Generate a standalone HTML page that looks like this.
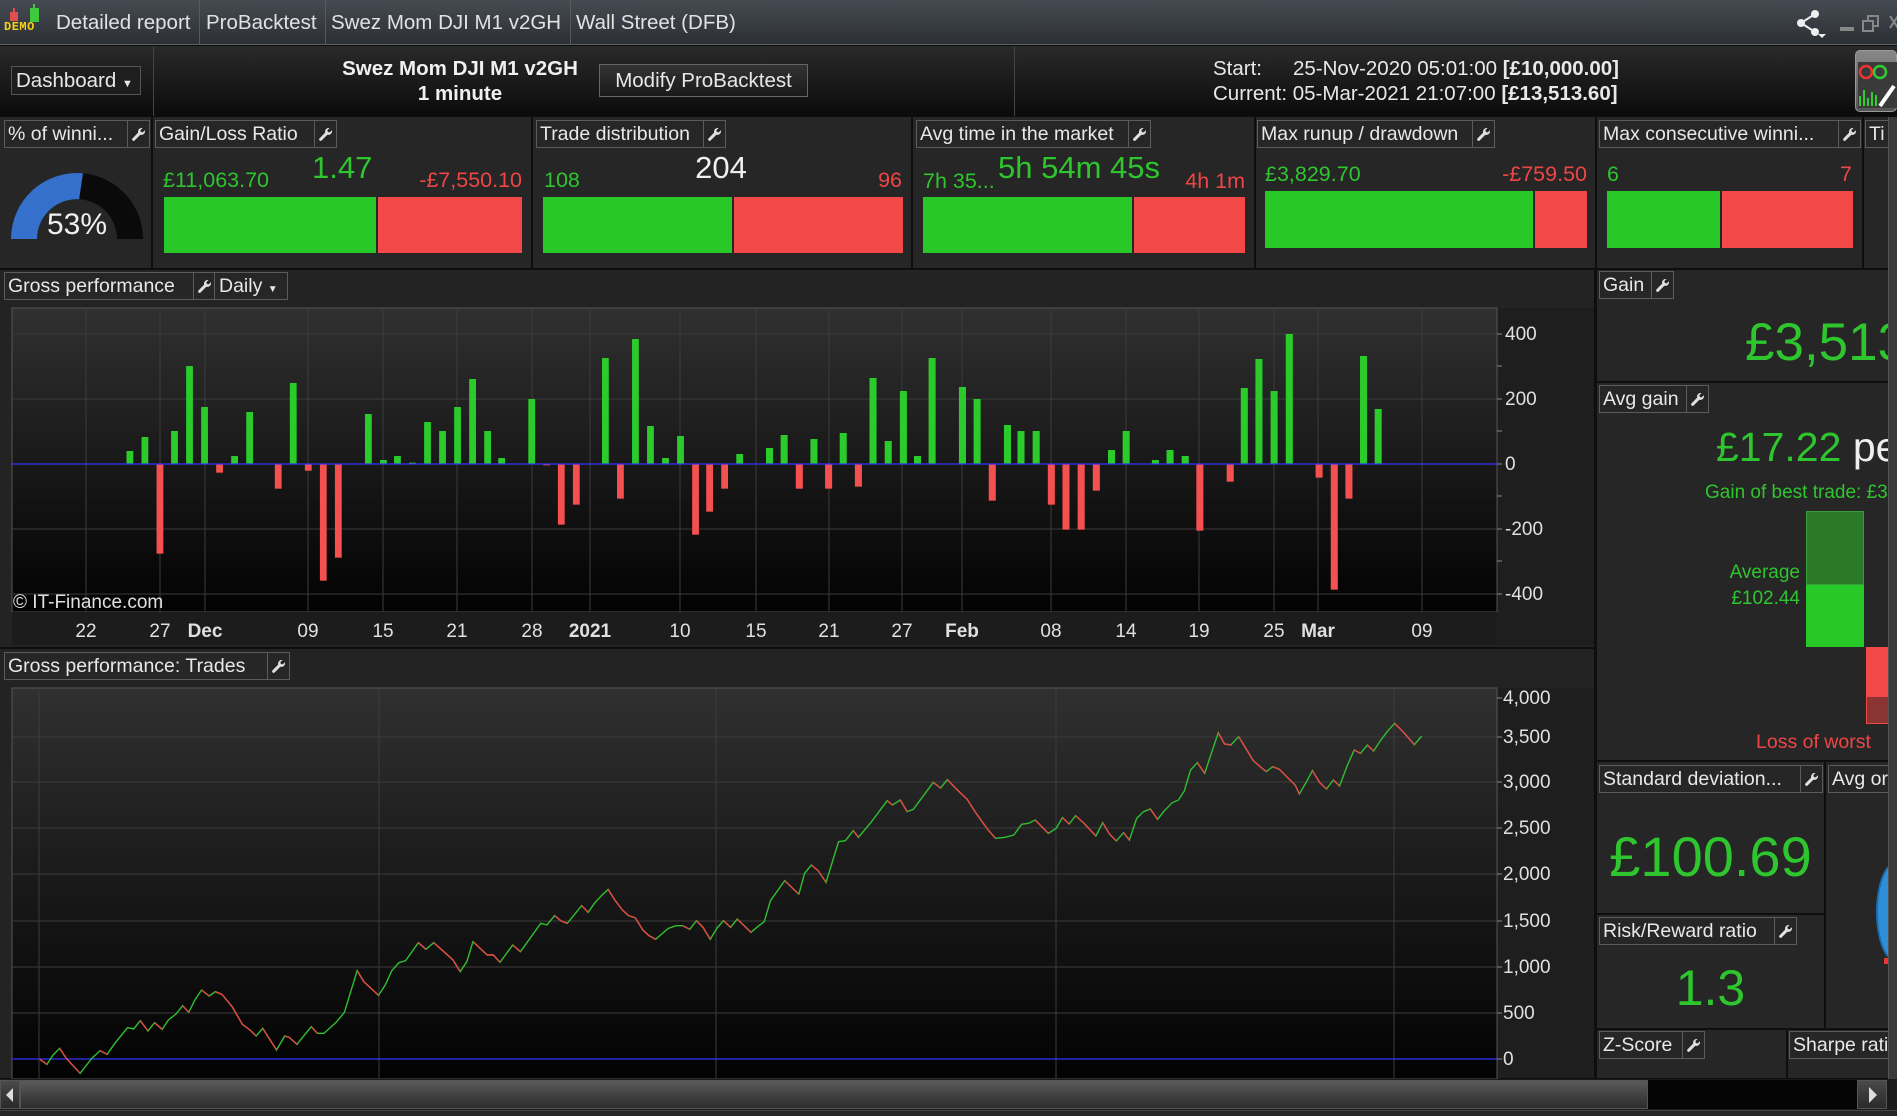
<!DOCTYPE html>
<html><head><meta charset="utf-8">
<style>
*{margin:0;padding:0;box-sizing:border-box}
body{width:1897px;height:1116px;background:#0e0e0e;font-family:"Liberation Sans",Arial,sans-serif;color:#e6e6e6;position:relative;overflow:hidden}
.a{position:absolute}
.p{position:absolute;background:#262626}
.hb{position:absolute;height:28px;display:flex;border:1px solid #5c5c5c;background:#262626;font-size:19.5px;line-height:26px;color:#e8e8e8;white-space:nowrap;overflow:hidden}
.hb .t{flex:1;padding-left:3px;overflow:hidden}
.hb .k{width:22px;flex:none;border-left:1px solid #5c5c5c;display:flex;align-items:center;justify-content:center}
.g{color:#2ec52e}.r{color:#f04545}
.bar{position:absolute}
.gb{background:#29c829}.rb{background:#f24848}
.tl{position:absolute;font-size:20.5px;color:#e2e2e2;top:11px;white-space:nowrap}
.sep{position:absolute;width:1px;background:#5a5a5a}
.sv{font-size:21.5px}
</style></head><body>
<svg width="0" height="0" style="position:absolute"><defs>
<symbol id="wr" viewBox="0 0 16 16"><path d="M11.5 1a4 4 0 0 0-3.9 5L1.5 12.3a1.3 1.3 0 0 0 0 1.8l.4.4a1.3 1.3 0 0 0 1.8 0L10 8.3a4 4 0 0 0 5-3.9l-.2-1-2.3 2.3-2-.4-.5-2L12.3 1z" fill="#e0e0e0"/></symbol>
</defs></svg>

<!-- Title bar -->
<div class="a" style="left:0;top:0;width:1897px;height:45px;background:linear-gradient(#464b52,#2c3035);border-bottom:1px solid #5c6066"></div>
<div class="a" style="left:10px;top:12px;width:8px;height:9px;background:#e05050"></div>
<div class="a" style="left:13px;top:8px;width:2px;height:4px;background:#e05050"></div>
<div class="a" style="left:30px;top:8px;width:9px;height:14px;background:#3ec93e"></div>
<div class="a" style="left:33px;top:4px;width:2px;height:4px;background:#3ec93e"></div>
<div class="a" style="left:4px;top:20px;font-size:12px;font-weight:bold;color:#f2d21a;letter-spacing:0.5px;font-family:'Liberation Mono',monospace">DEMO</div>
<div class="tl" style="left:56px">Detailed report</div>
<div class="sep" style="left:199px;top:0;height:45px"></div>
<div class="tl" style="left:206px">ProBacktest</div>
<div class="sep" style="left:325px;top:0;height:45px"></div>
<div class="tl" style="left:331px">Swez Mom DJI M1 v2GH</div>
<div class="sep" style="left:570px;top:0;height:45px"></div>
<div class="tl" style="left:576px">Wall Street (DFB)</div>
<svg class="a" style="left:1790px;top:8px" width="107" height="30">
<circle cx="25" cy="6" r="4" fill="#eee"/><circle cx="11" cy="15" r="4" fill="#eee"/><circle cx="25" cy="24" r="4" fill="#eee"/>
<path d="M25 6L11 15L25 24" stroke="#eee" stroke-width="2" fill="none"/><path d="M28 26h8l-4 4z" fill="#eee"/>
<rect x="50" y="19" width="14" height="4" fill="#888"/>
<rect x="78" y="8" width="10" height="10" fill="none" stroke="#888" stroke-width="2"/><rect x="73" y="13" width="10" height="10" fill="#3a3e44" stroke="#888" stroke-width="2"/>
<path d="M100 8l8 12M108 8l-8 12" stroke="#888" stroke-width="2"/>
</svg>

<!-- Header row -->
<div class="a" style="left:0;top:46px;width:1897px;height:70px;background:linear-gradient(#2a2a2a,#0b0b0b)"></div>
<div class="sep" style="left:153px;top:46px;height:70px;background:#444"></div>
<div class="sep" style="left:1014px;top:46px;height:70px;background:#444"></div>
<div class="a" style="left:11px;top:66px;width:130px;height:29px;border:1px solid #555;background:#1e1e1e;font-size:20.5px;line-height:27px;padding-left:4px;color:#e8e8e8;white-space:nowrap">Dashboard <span style="font-size:11px">▼</span></div>
<div class="a" style="left:320px;top:56px;width:280px;text-align:center;font-size:20.5px;font-weight:bold;color:#f0f0f0;line-height:25px;white-space:nowrap">Swez Mom DJI M1 v2GH<br>1 minute</div>
<div class="a" style="left:599px;top:64px;width:209px;height:33px;border:1px solid #666;background:linear-gradient(#333,#1a1a1a);font-size:20.5px;line-height:31px;text-align:center;color:#e8e8e8;white-space:nowrap">Modify ProBacktest</div>
<div class="a" style="left:1213px;top:56px;font-size:20.5px;line-height:25px;color:#e8e8e8;white-space:nowrap">Start:<span style="display:inline-block;width:31px"></span>25-Nov-2020 05:01:00 <b>[£10,000.00]</b><br>Current: 05-Mar-2021 21:07:00 <b>[£13,513.60]</b></div>
<div class="a" style="left:1855px;top:50px;width:42px;height:62px;border-radius:5px;background:linear-gradient(#888,#555);border:1px solid #999"></div>
<div class="a" style="left:1858px;top:62px;width:39px;height:46px;background:#3a3a3a"></div>
<svg class="a" style="left:1858px;top:62px" width="39" height="46"><circle cx="8" cy="10" r="6" fill="none" stroke="#e33" stroke-width="2.5"/><circle cx="22" cy="10" r="6" fill="none" stroke="#3c3" stroke-width="2.5"/><path d="M2 44V34M6 44V28M10 44V36M14 44V30M18 44V33" stroke="#3c3" stroke-width="2"/><path d="M36 24L22 44" stroke="#fff" stroke-width="4"/></svg>

<!-- Stats row panels -->
<div class="p" style="left:0;top:117px;width:151px;height:151px"></div>
<div class="p" style="left:153px;top:117px;width:378px;height:151px"></div>
<div class="p" style="left:533px;top:117px;width:378px;height:151px"></div>
<div class="p" style="left:913px;top:117px;width:341px;height:151px"></div>
<div class="p" style="left:1256px;top:117px;width:339px;height:151px"></div>
<div class="p" style="left:1597px;top:117px;width:265px;height:151px"></div>
<div class="p" style="left:1864px;top:117px;width:24px;height:151px"></div>

<div class="hb" style="left:4px;top:120px;width:146px"><span class="t">% of winni...</span><span class="k"><svg width="15" height="15"><use href="#wr"/></svg></span></div>
<div class="hb" style="left:155px;top:120px;width:182px"><span class="t">Gain/Loss Ratio</span><span class="k"><svg width="15" height="15"><use href="#wr"/></svg></span></div>
<div class="hb" style="left:536px;top:120px;width:190px"><span class="t">Trade distribution</span><span class="k"><svg width="15" height="15"><use href="#wr"/></svg></span></div>
<div class="hb" style="left:916px;top:120px;width:235px"><span class="t">Avg time in the market</span><span class="k"><svg width="15" height="15"><use href="#wr"/></svg></span></div>
<div class="hb" style="left:1257px;top:120px;width:238px"><span class="t">Max runup / drawdown</span><span class="k"><svg width="15" height="15"><use href="#wr"/></svg></span></div>
<div class="hb" style="left:1599px;top:120px;width:262px"><span class="t">Max consecutive winni...</span><span class="k"><svg width="15" height="15"><use href="#wr"/></svg></span></div>
<div class="hb" style="left:1865px;top:120px;width:30px"><span class="t">Ti</span></div>

<!-- gauge -->
<svg class="a" style="left:0;top:165px" width="151" height="80">
<path d="M11 74A66 66 0 0 1 83 8.3L79.2 34.2A40 40 0 0 0 37 74Z" fill="#3570cc"/>
<path d="M83 8.3A66 66 0 0 1 143 74H117A40 40 0 0 0 79.2 34.2Z" fill="#0a0a0a"/>
</svg>
<div class="a" style="left:37px;top:208px;width:80px;text-align:center;font-size:30px;color:#f0f0f0">53%</div>

<div class="a g sv" style="left:163px;top:168px">£11,063.70</div>
<div class="a g" style="left:312px;top:150px;font-size:31px">1.47</div>
<div class="a r sv" style="left:380px;top:168px;width:142px;text-align:right">-£7,550.10</div>
<div class="bar gb" style="left:164px;top:197px;width:212px;height:56px"></div>
<div class="bar rb" style="left:378px;top:197px;width:144px;height:56px"></div>

<div class="a g sv" style="left:544px;top:168px">108</div>
<div class="a" style="left:680px;top:150px;width:82px;text-align:center;font-size:31px;color:#f0f0f0">204</div>
<div class="a r sv" style="left:860px;top:168px;width:42px;text-align:right">96</div>
<div class="bar gb" style="left:543px;top:197px;width:189px;height:56px"></div>
<div class="bar rb" style="left:734px;top:197px;width:169px;height:56px"></div>

<div class="a g sv" style="left:923px;top:169px">7h 35...</div>
<div class="a g" style="left:998px;top:150px;font-size:31px;white-space:nowrap">5h 54m 45s</div>
<div class="a r sv" style="left:1175px;top:169px;width:70px;text-align:right">4h 1m</div>
<div class="bar gb" style="left:923px;top:197px;width:209px;height:56px"></div>
<div class="bar rb" style="left:1134px;top:197px;width:111px;height:56px"></div>

<div class="a g sv" style="left:1265px;top:162px">£3,829.70</div>
<div class="a r sv" style="left:1470px;top:162px;width:117px;text-align:right">-£759.50</div>
<div class="bar gb" style="left:1265px;top:191px;width:268px;height:57px"></div>
<div class="bar rb" style="left:1535px;top:191px;width:52px;height:57px"></div>

<div class="a g sv" style="left:1607px;top:162px">6</div>
<div class="a r sv" style="left:1830px;top:162px;width:22px;text-align:right">7</div>
<div class="bar gb" style="left:1607px;top:191px;width:113px;height:57px"></div>
<div class="bar rb" style="left:1722px;top:191px;width:131px;height:57px"></div>

<!-- left chart panels -->
<div class="p" style="left:0;top:270px;width:1594px;height:377px;background:#232323"></div>
<div class="p" style="left:0;top:649px;width:1594px;height:429px;background:#232323"></div>
<div class="a" style="left:1497px;top:308px;width:97px;height:337px;background:#1e1e1e"></div>
<div class="a" style="left:1497px;top:688px;width:97px;height:390px;background:#1e1e1e"></div>

<svg class="a" style="left:0;top:0" width="1897" height="1116">
<defs>
<linearGradient id="bg" x1="0" y1="0" x2="0" y2="1"><stop offset="0" stop-color="#303030"/><stop offset="1" stop-color="#020202"/></linearGradient>
</defs>
<rect x="12" y="308" width="1485" height="304" fill="url(#bg)" stroke="#555" stroke-width="1"/>
<rect x="12" y="612" width="1485" height="33" fill="#1c1c1c"/>
<g stroke="#3c3c3c" stroke-width="1">
<path d="M12 334H1497M12 399H1497M12 529H1497M12 594H1497"/>
<path d="M86 308V612M160 308V612M205 308V612M308 308V612M383 308V612M457 308V612M532 308V612M590 308V612M680 308V612M756 308V612M829 308V612M902 308V612M962 308V612M1051 308V612M1126 308V612M1199 308V612M1274 308V612M1318 308V612M1422 308V612"/>
</g>
<path d="M1497 334h5M1497 366h5M1497 399h5M1497 431h5M1497 464h5M1497 496h5M1497 529h5M1497 561h5M1497 594h5" stroke="#888"/>
<g transform="translate(0,270) scale(0.4847,0.33333)" fill="#2ccb2c">
<rect x="261" y="543" width="14" height="40"/><rect x="292" y="501" width="14" height="82"/><rect x="353" y="483" width="14" height="100"/><rect x="384" y="288" width="14" height="295"/><rect x="415" y="411" width="14" height="172"/><rect x="477" y="558" width="14" height="25"/><rect x="508" y="426" width="14" height="157"/><rect x="598" y="339" width="14" height="244"/><rect x="753" y="432" width="14" height="151"/><rect x="784" y="570" width="14" height="13"/><rect x="813" y="558" width="14" height="25"/><rect x="844" y="578" width="14" height="5"/><rect x="875" y="456" width="14" height="127"/><rect x="906" y="483" width="14" height="100"/><rect x="937" y="411" width="14" height="172"/><rect x="968" y="327" width="14" height="256"/><rect x="999" y="483" width="14" height="100"/><rect x="1028" y="564" width="14" height="19"/><rect x="1090" y="387" width="14" height="196"/><rect x="1242" y="264" width="14" height="319"/><rect x="1304" y="207" width="14" height="376"/><rect x="1335" y="468" width="14" height="115"/><rect x="1366" y="564" width="14" height="19"/><rect x="1397" y="498" width="14" height="85"/><rect x="1519" y="552" width="14" height="31"/>
<g fill="#f55050">
<rect x="323" y="583" width="14" height="268"/><rect x="446" y="583" width="14" height="25"/><rect x="567" y="583" width="14" height="73"/><rect x="629" y="583" width="14" height="19"/><rect x="660" y="583" width="14" height="349"/><rect x="691" y="583" width="14" height="280"/><rect x="1121" y="583" width="14" height="3"/><rect x="1151" y="583" width="14" height="181"/><rect x="1182" y="583" width="14" height="121"/><rect x="1273" y="583" width="14" height="103"/><rect x="1428" y="583" width="14" height="211"/><rect x="1457" y="583" width="14" height="142"/><rect x="1488" y="583" width="14" height="73"/>
</g></g>
<g transform="translate(750,270) scale(0.542,0.33333)" fill="#2ccb2c">
<rect x="29.5" y="534" width="13" height="49"/><rect x="56.5" y="495" width="13" height="88"/><rect x="111.5" y="507" width="13" height="76"/><rect x="165.5" y="489" width="13" height="94"/><rect x="220.5" y="324" width="13" height="259"/><rect x="248.5" y="513" width="13" height="70"/><rect x="276.5" y="363" width="13" height="220"/><rect x="302.5" y="558" width="13" height="25"/><rect x="329.5" y="264" width="13" height="319"/><rect x="385.5" y="351" width="13" height="232"/><rect x="412.5" y="387" width="13" height="196"/><rect x="468.5" y="465" width="13" height="118"/><rect x="493.5" y="483" width="13" height="100"/><rect x="521.5" y="483" width="13" height="100"/><rect x="660.5" y="540" width="13" height="43"/><rect x="687.5" y="483" width="13" height="100"/><rect x="741.5" y="570" width="13" height="13"/><rect x="768.5" y="540" width="13" height="43"/><rect x="796.5" y="558" width="13" height="25"/><rect x="905.5" y="354" width="13" height="229"/><rect x="932.5" y="267" width="13" height="316"/><rect x="960.5" y="363" width="13" height="220"/><rect x="988.5" y="192" width="13" height="391"/><rect x="1125.5" y="258" width="13" height="325"/><rect x="1152.5" y="417" width="13" height="166"/>
<g fill="#f55050">
<rect x="84.5" y="583" width="13" height="73"/><rect x="138.5" y="583" width="13" height="73"/><rect x="193.5" y="583" width="13" height="67"/><rect x="440.5" y="583" width="13" height="109"/><rect x="549.5" y="583" width="13" height="121"/><rect x="576.5" y="583" width="13" height="196"/><rect x="604.5" y="583" width="13" height="196"/><rect x="632.5" y="583" width="13" height="79"/><rect x="823.5" y="583" width="13" height="199"/><rect x="879.5" y="583" width="13" height="52"/><rect x="1043.5" y="583" width="13" height="40"/><rect x="1071.5" y="583" width="13" height="376"/><rect x="1098.5" y="583" width="13" height="103"/>
</g></g>
<path d="M12 464H1497" stroke="#3333ff" stroke-width="1.2"/>
<g font-family="Liberation Sans,Arial,sans-serif" font-size="19" fill="#e0e0e0">
<text x="1505" y="340">400</text><text x="1505" y="405">200</text><text x="1505" y="470">0</text><text x="1505" y="535">-200</text><text x="1505" y="600">-400</text>
<text x="13" y="608" font-size="19">© IT-Finance.com</text>
<g text-anchor="middle">
<text x="86" y="637">22</text><text x="160" y="637">27</text><text x="205" y="637" font-weight="bold">Dec</text><text x="308" y="637">09</text><text x="383" y="637">15</text><text x="457" y="637">21</text><text x="532" y="637">28</text><text x="590" y="637" font-weight="bold">2021</text><text x="680" y="637">10</text><text x="756" y="637">15</text><text x="829" y="637">21</text><text x="902" y="637">27</text><text x="962" y="637" font-weight="bold">Feb</text><text x="1051" y="637">08</text><text x="1126" y="637">14</text><text x="1199" y="637">19</text><text x="1274" y="637">25</text><text x="1318" y="637" font-weight="bold">Mar</text><text x="1422" y="637">09</text>
</g></g>

<rect x="12" y="688" width="1485" height="391" fill="url(#bg)" stroke="#555" stroke-width="1"/>
<g stroke="#3c3c3c" stroke-width="1">
<path d="M12 737H1497M12 782H1497M12 828H1497M12 874H1497M12 921H1497M12 967H1497M12 1013H1497"/>
<path d="M39 688V1079M379 688V1079M716 688V1079M1056 688V1079M1394 688V1079"/>
</g>
<path d="M1497 698h5M1497 737h5M1497 782h5M1497 828h5M1497 874h5M1497 921h5M1497 967h5M1497 1013h5M1497 1059h5" stroke="#888"/>
<path d="M12 1059H1497" stroke="#3333ff" stroke-width="1.2"/>
<g transform="translate(0,650) scale(0.5102,0.33333)" fill="none" stroke-width="1.4">
<polyline vector-effect="non-scaling-stroke" stroke="#2fbf2f" points="78,1228 92,1243 104,1215 117,1195 130,1225 157,1270 180,1225 196,1202 210,1213 225,1180 250,1133 262,1137 275,1112 290,1143 303,1118 318,1138 330,1110 345,1092 358,1067 370,1087 382,1050 395,1020 410,1038 422,1025 435,1033 455,1070 475,1123 490,1140 502,1158 515,1135 542,1200 558,1158 567,1162 582,1183 610,1130 622,1150 635,1150 660,1115 675,1087 700,962 713,995 742,1036 755,1005 768,962 782,938 795,932 820,878 835,898 850,878 870,905 888,930 902,965 915,935 927,875 955,915 967,915 980,937 1005,885 1020,905 1060,820 1072,825 1087,797 1100,813 1112,820 1140,767 1153,787 1165,760 1180,735 1192,718 1205,750 1220,780 1232,797 1245,803 1260,840 1272,857 1285,868 1310,835 1325,827 1338,827 1352,838 1365,812 1378,832 1392,868 1405,835 1418,812 1432,832 1445,807 1472,847 1485,830 1498,815 1510,752 1538,692 1566,733"/>
<g stroke="#e84444">
<polyline vector-effect="non-scaling-stroke" points="78,1228 92,1243"/>
<polyline vector-effect="non-scaling-stroke" points="117,1195 130,1225 157,1270"/>
<polyline vector-effect="non-scaling-stroke" points="196,1202 210,1213"/>
<polyline vector-effect="non-scaling-stroke" points="275,1112 290,1143"/>
<polyline vector-effect="non-scaling-stroke" points="303,1118 318,1138"/>
<polyline vector-effect="non-scaling-stroke" points="358,1067 370,1087"/>
<polyline vector-effect="non-scaling-stroke" points="395,1020 410,1038"/>
<polyline vector-effect="non-scaling-stroke" points="422,1025 435,1033 455,1070 475,1123 490,1140 502,1158"/>
<polyline vector-effect="non-scaling-stroke" points="515,1135 542,1200"/>
<polyline vector-effect="non-scaling-stroke" points="558,1158 567,1162 582,1183"/>
<polyline vector-effect="non-scaling-stroke" points="610,1130 622,1150"/>
<polyline vector-effect="non-scaling-stroke" points="700,962 713,995 742,1036"/>
<polyline vector-effect="non-scaling-stroke" points="820,878 835,898"/>
<polyline vector-effect="non-scaling-stroke" points="850,878 870,905 888,930 902,965"/>
<polyline vector-effect="non-scaling-stroke" points="927,875 955,915 967,915 980,937"/>
<polyline vector-effect="non-scaling-stroke" points="1005,885 1020,905"/>
<polyline vector-effect="non-scaling-stroke" points="1087,797 1100,813 1112,820"/>
<polyline vector-effect="non-scaling-stroke" points="1140,767 1153,787"/>
<polyline vector-effect="non-scaling-stroke" points="1192,718 1205,750 1220,780 1232,797 1245,803 1260,840 1272,857 1285,868"/>
<polyline vector-effect="non-scaling-stroke" points="1338,827 1352,838"/>
<polyline vector-effect="non-scaling-stroke" points="1365,812 1378,832 1392,868"/>
<polyline vector-effect="non-scaling-stroke" points="1418,812 1432,832"/>
<polyline vector-effect="non-scaling-stroke" points="1445,807 1472,847"/>
<polyline vector-effect="non-scaling-stroke" points="1538,692 1566,733"/>
</g></g>
<g transform="translate(780,650) scale(0.523,0.33333)" fill="none" stroke-width="1.4">
<polyline vector-effect="non-scaling-stroke" stroke="#2fbf2f" points="36,733 47,670 60,645 73,662 88,697 112,575 125,572 140,542 150,562 175,515 205,452 215,465 230,450 243,485 255,478 293,397 307,414 320,389 338,418 358,448 375,490 398,540 412,565 430,562 447,555 462,523 475,520 488,510 513,550 528,535 540,503 553,522 565,497 580,518 604,558 617,518 630,552 643,573 657,548 668,570 682,505 695,485 708,477 722,508 735,482 750,458 762,450 773,423 785,360 798,338 812,370 838,248 850,282 862,285 877,260 905,332 918,350 930,365 942,350 955,358 972,385 985,405 993,432 1005,400 1018,362 1032,398 1045,417 1058,390 1070,408 1085,345 1098,300 1110,310 1123,285 1135,303 1148,272 1160,247 1175,220 1190,243 1213,284 1227,258"/>
<g stroke="#e84444">
<polyline vector-effect="non-scaling-stroke" points="60,645 73,662 88,697"/>
<polyline vector-effect="non-scaling-stroke" points="140,542 150,562"/>
<polyline vector-effect="non-scaling-stroke" points="205,452 215,465"/>
<polyline vector-effect="non-scaling-stroke" points="230,450 243,485"/>
<polyline vector-effect="non-scaling-stroke" points="293,397 307,414"/>
<polyline vector-effect="non-scaling-stroke" points="320,389 338,418 358,448 375,490 398,540 412,565"/>
<polyline vector-effect="non-scaling-stroke" points="488,510 513,550"/>
<polyline vector-effect="non-scaling-stroke" points="540,503 553,522"/>
<polyline vector-effect="non-scaling-stroke" points="565,497 580,518 604,558"/>
<polyline vector-effect="non-scaling-stroke" points="617,518 630,552 643,573"/>
<polyline vector-effect="non-scaling-stroke" points="657,548 668,570"/>
<polyline vector-effect="non-scaling-stroke" points="708,477 722,508"/>
<polyline vector-effect="non-scaling-stroke" points="798,338 812,370"/>
<polyline vector-effect="non-scaling-stroke" points="838,248 850,282 862,285"/>
<polyline vector-effect="non-scaling-stroke" points="877,260 905,332 918,350 930,365"/>
<polyline vector-effect="non-scaling-stroke" points="942,350 955,358 972,385 985,405 993,432"/>
<polyline vector-effect="non-scaling-stroke" points="1018,362 1032,398 1045,417"/>
<polyline vector-effect="non-scaling-stroke" points="1058,390 1070,408"/>
<polyline vector-effect="non-scaling-stroke" points="1098,300 1110,310"/>
<polyline vector-effect="non-scaling-stroke" points="1123,285 1135,303"/>
<polyline vector-effect="non-scaling-stroke" points="1175,220 1190,243 1213,284"/>
</g></g>
<g font-family="Liberation Sans,Arial,sans-serif" font-size="19" fill="#e0e0e0">
<text x="1503" y="704">4,000</text><text x="1503" y="743">3,500</text><text x="1503" y="788">3,000</text><text x="1503" y="834">2,500</text><text x="1503" y="880">2,000</text><text x="1503" y="927">1,500</text><text x="1503" y="973">1,000</text><text x="1503" y="1019">500</text><text x="1503" y="1065">0</text>
</g>
</svg>

<div class="hb" style="left:4px;top:272px;width:284px"><span class="t" style="flex:none;width:188px">Gross performance</span><span class="k" style="width:21px"><svg width="15" height="15"><use href="#wr"/></svg></span><span style="border-left:1px solid #5c5c5c;padding-left:4px;flex:1">Daily <span style="font-size:10px">▼</span></span></div>
<div class="hb" style="left:4px;top:652px;width:286px"><span class="t">Gross performance: Trades</span><span class="k"><svg width="15" height="15"><use href="#wr"/></svg></span></div>

<!-- right column -->
<div class="p" style="left:1597px;top:270px;width:291px;height:111px"></div>
<div class="p" style="left:1597px;top:383px;width:291px;height:377px"></div>
<div class="p" style="left:1597px;top:762px;width:227px;height:151px"></div>
<div class="p" style="left:1597px;top:915px;width:227px;height:113px"></div>
<div class="p" style="left:1826px;top:762px;width:62px;height:266px"></div>
<div class="p" style="left:1597px;top:1030px;width:189px;height:48px"></div>
<div class="p" style="left:1788px;top:1030px;width:100px;height:48px"></div>

<div class="hb" style="left:1599px;top:271px;width:75px"><span class="t">Gain</span><span class="k"><svg width="15" height="15"><use href="#wr"/></svg></span></div>
<div class="a g" style="left:1745px;top:312px;font-size:53px;width:143px;overflow:hidden;white-space:nowrap">£3,513.60</div>

<div class="hb" style="left:1599px;top:385px;width:110px"><span class="t">Avg gain</span><span class="k"><svg width="15" height="15"><use href="#wr"/></svg></span></div>
<div class="a" style="left:1716px;top:424px;width:172px;overflow:hidden;white-space:nowrap;font-size:41px"><span class="g">£17.22</span> <span style="color:#eee">per trade</span></div>
<div class="a g" style="left:1705px;top:482px;width:183px;overflow:hidden;white-space:nowrap;font-size:19px">Gain of best trade: £380.00</div>
<div class="a" style="left:1806px;top:511px;width:58px;height:74px;background:#2a7a2a;border:1px solid #35a035"></div>
<div class="a" style="left:1806px;top:585px;width:58px;height:62px;background:#29c829"></div>
<div class="a g" style="left:1700px;top:560px;width:100px;text-align:right;font-size:19px;line-height:26px">Average<br>£102.44</div>
<div class="a" style="left:1866px;top:647px;width:22px;height:50px;background:#f24848"></div>
<div class="a" style="left:1866px;top:697px;width:22px;height:27px;background:#8a3434;border-left:1px solid #f24848;border-bottom:1px solid #f24848"></div>
<div class="a r" style="left:1756px;top:731px;width:132px;overflow:hidden;white-space:nowrap;font-size:19.5px">Loss of worst</div>

<div class="hb" style="left:1599px;top:765px;width:224px"><span class="t">Standard deviation...</span><span class="k"><svg width="15" height="15"><use href="#wr"/></svg></span></div>
<div class="a g" style="left:1597px;top:824px;width:227px;text-align:center;font-size:56px">£100.69</div>
<div class="hb" style="left:1828px;top:765px;width:65px"><span class="t">Avg or</span></div>
<div class="a" style="left:1876px;top:862px;width:40px;height:100px;border-radius:50%;background:#2e8fd8;border:2px solid #1b6fb0"></div>
<div class="a" style="left:1884px;top:958px;width:6px;height:6px;background:#e33"></div>

<div class="hb" style="left:1599px;top:917px;width:198px"><span class="t">Risk/Reward ratio</span><span class="k"><svg width="15" height="15"><use href="#wr"/></svg></span></div>
<div class="a g" style="left:1597px;top:959px;width:227px;text-align:center;font-size:50px">1.3</div>

<div class="hb" style="left:1599px;top:1031px;width:106px"><span class="t">Z-Score</span><span class="k"><svg width="15" height="15"><use href="#wr"/></svg></span></div>
<div class="hb" style="left:1789px;top:1031px;width:110px"><span class="t">Sharpe ratio</span></div>

<div class="a" style="left:1888px;top:117px;width:9px;height:962px;background:#3a3a3a;border-left:1px solid #555"></div>

<div class="a" style="left:0;top:1079px;width:1897px;height:37px;background:#1a1a1a"></div>
<div class="a" style="left:0;top:1080px;width:20px;height:29px;background:linear-gradient(#4a4a4a,#2a2a2a);border:1px solid #555"></div>
<div class="a" style="left:6px;top:1088px;width:0;height:0;border-top:7px solid transparent;border-bottom:7px solid transparent;border-right:7px solid #ddd"></div>
<div class="a" style="left:20px;top:1080px;width:1628px;height:29px;background:linear-gradient(#5a5a5a,#2c2c2c);border:1px solid #555"></div>
<div class="a" style="left:1648px;top:1080px;width:209px;height:29px;background:#050505"></div>
<div class="a" style="left:1857px;top:1080px;width:30px;height:29px;background:linear-gradient(#4a4a4a,#2a2a2a);border:1px solid #555"></div>
<div class="a" style="left:1869px;top:1087px;width:0;height:0;border-top:8px solid transparent;border-bottom:8px solid transparent;border-left:8px solid #ddd"></div>
<div class="a" style="left:0;top:1110px;width:1897px;height:6px;background:#262626;border-top:1px solid #444"></div>
</body></html>
